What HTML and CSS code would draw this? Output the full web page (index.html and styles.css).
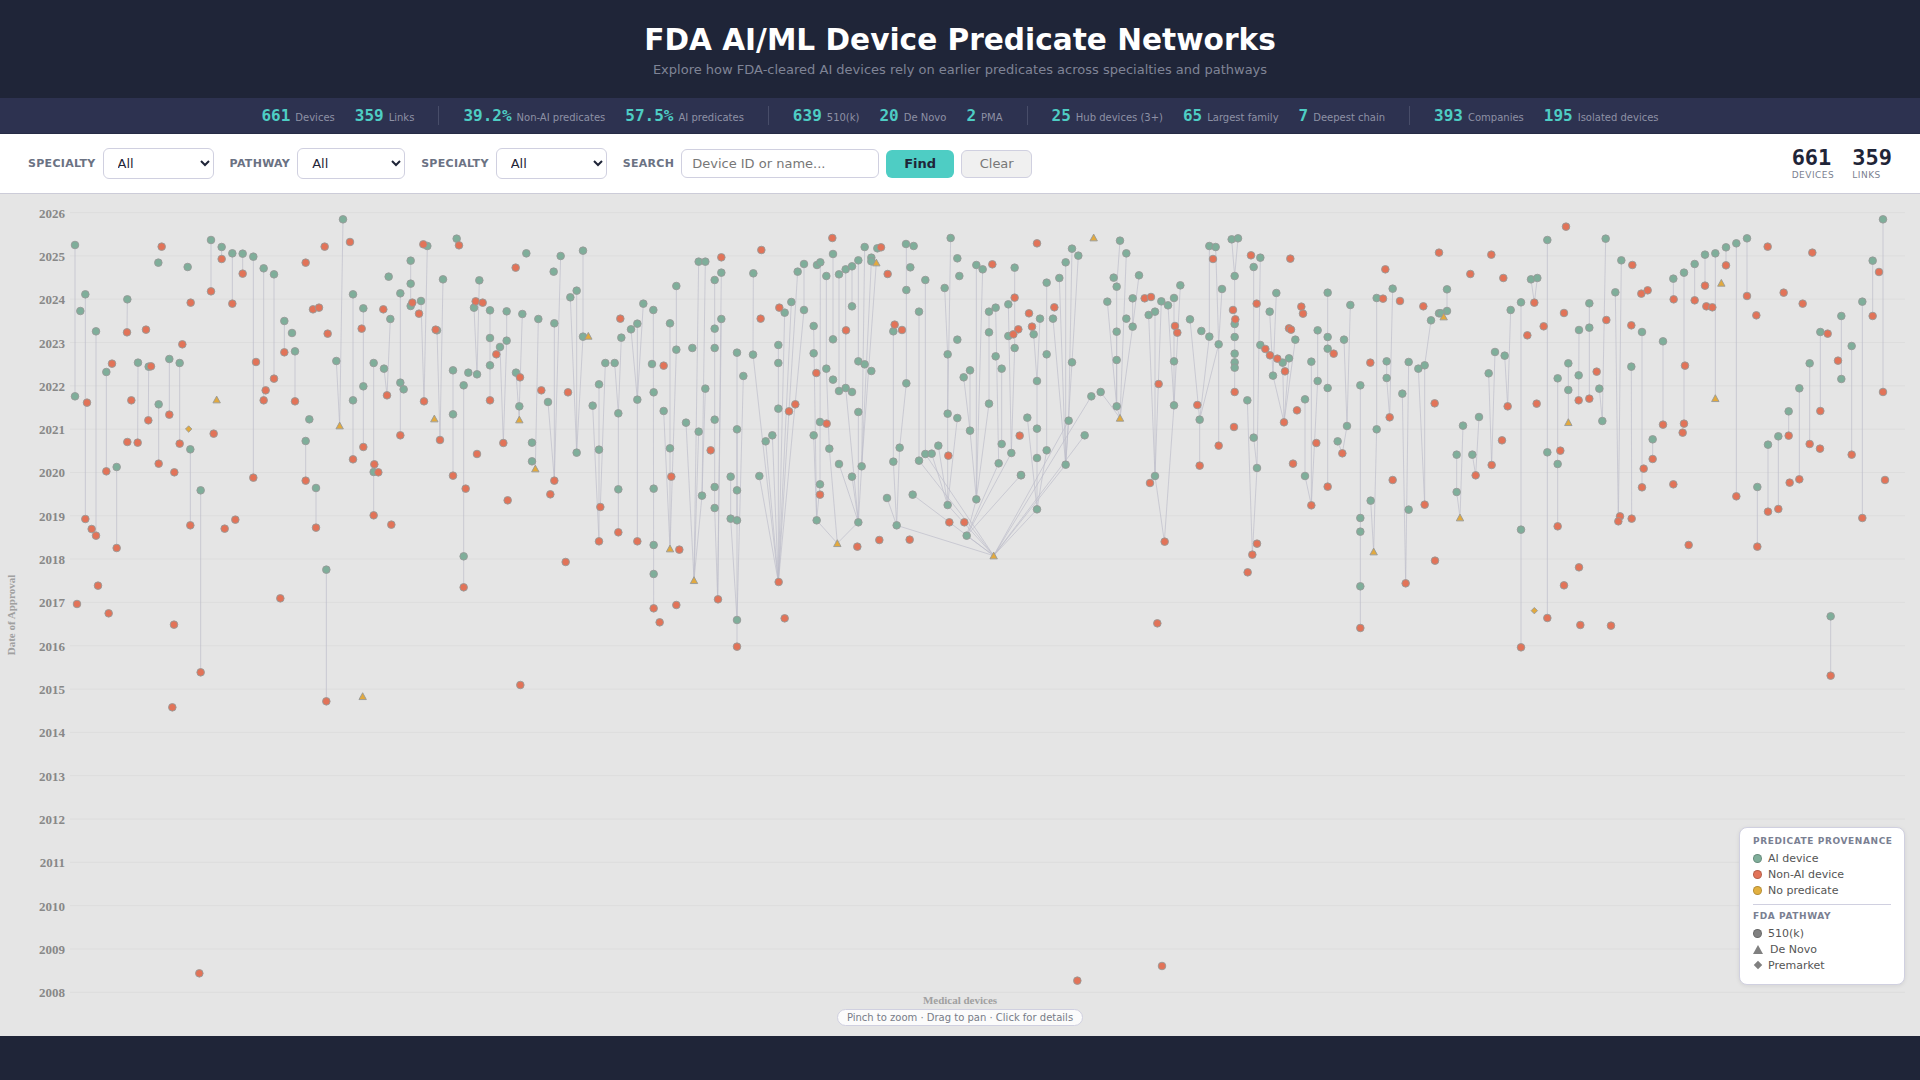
FILE: index.html
```html
<!DOCTYPE html>
<html lang="en">
<head>
    <meta charset="UTF-8">
    <meta name="viewport" content="width=device-width, initial-scale=1.0">
    <title>FDA AI/ML Device Predicate Networks</title>
    <link rel="stylesheet" href="styles.css">
</head>
<body>
    <header class="site-header">
        <h1>FDA AI/ML Device Predicate Networks</h1>
        <p>Explore how FDA-cleared AI devices rely on earlier predicates across specialties and pathways</p>
    </header>

    <div class="stats-bar">
        <div class="stat-group">
            <div class="stat"><b>661</b><span>Devices</span></div>
            <div class="stat"><b>359</b><span>Links</span></div>
        </div>
        <div class="stat-group">
            <div class="stat"><b>39.2%</b><span>Non-AI predicates</span></div>
            <div class="stat"><b>57.5%</b><span>AI predicates</span></div>
        </div>
        <div class="stat-group">
            <div class="stat"><b>639</b><span>510(k)</span></div>
            <div class="stat"><b>20</b><span>De Novo</span></div>
            <div class="stat"><b>2</b><span>PMA</span></div>
        </div>
        <div class="stat-group">
            <div class="stat"><b>25</b><span>Hub devices (3+)</span></div>
            <div class="stat"><b>65</b><span>Largest family</span></div>
            <div class="stat"><b>7</b><span>Deepest chain</span></div>
        </div>
        <div class="stat-group">
            <div class="stat"><b>393</b><span>Companies</span></div>
            <div class="stat"><b>195</b><span>Isolated devices</span></div>
        </div>
    </div>

    <div class="toolbar">
        <div class="filter">
            <label for="specialty-a">Specialty</label>
            <select id="specialty-a"><option>All</option></select>
        </div>
        <div class="filter">
            <label for="pathway">Pathway</label>
            <select id="pathway" class="narrow"><option>All</option></select>
        </div>
        <div class="filter">
            <label for="specialty-b">Specialty</label>
            <select id="specialty-b"><option>All</option></select>
        </div>
        <div class="filter search">
            <label for="search">Search</label>
            <input type="text" id="search" placeholder="Device ID or name...">
            <button type="button" class="find-button">Find</button>
            <button type="button" class="clear-button">Clear</button>
        </div>
        <div class="totals">
            <div class="total"><b>661</b><span>Devices</span></div>
            <div class="total"><b>359</b><span>Links</span></div>
        </div>
    </div>

    <main class="chart">
        <svg id="plot" class="plot" width="1920" height="842"></svg>

        <div class="hint">Pinch to zoom · Drag to pan · Click for details</div>

        <aside class="legend">
            <h4>Predicate Provenance</h4>
            <div class="legend-item"><i class="dot ai"></i>AI device</div>
            <div class="legend-item"><i class="dot non-ai"></i>Non-AI device</div>
            <div class="legend-item"><i class="dot none"></i>No predicate</div>
            <hr>
            <h4>FDA Pathway</h4>
            <div class="legend-item"><i class="dot grey"></i>510(k)</div>
            <div class="legend-item"><i class="tri"></i>De Novo</div>
            <div class="legend-item"><i class="dia"></i>Premarket</div>
        </aside>
    </main>

    <script src="chart.js"></script>
</body>
</html>
```

FILE: styles.css
```css
* {
    box-sizing: border-box;
}

html, body {
    height: 100%;
}

body {
    margin: 0;
    padding-bottom: 44px;
    display: flex;
    flex-direction: column;
    font-family: "DejaVu Sans", sans-serif;
    background-color: #1f2538;
    overflow: hidden;
}

.site-header {
    height: 98px;
    padding-top: 22px;
    text-align: center;
    background-color: #1f2538;
}

.site-header h1 {
    margin: 0;
    font-size: 29.6px;
    line-height: 36px;
    font-weight: 700;
    color: #fff;
}

.site-header p {
    margin: 3px 0 0;
    font-size: 13px;
    line-height: 17px;
    color: #7f8496;
}

.stats-bar {
    height: 36px;
    display: flex;
    justify-content: center;
    align-items: center;
    background-color: #2d3250;
    border-bottom: 1px solid #262b45;
}

.stat-group {
    display: flex;
    gap: 20px;
    padding: 0 24px;
    height: 19px;
    align-items: center;
    border-right: 1px solid #484d69;
}

.stat-group:last-child {
    border-right: none;
}

.stat {
    display: flex;
    align-items: baseline;
    gap: 5px;
    white-space: nowrap;
}

.stat b {
    font-family: "DejaVu Sans Mono", monospace;
    font-size: 16px;
    color: #4ecdc4;
}

.stat span {
    font-size: 10px;
    color: #8d91a5;
}

.toolbar {
    height: 60px;
    padding: 0 28px;
    display: flex;
    align-items: center;
    gap: 16px;
    background-color: #fff;
    border-bottom: 1px solid #ccccd8;
}

.filter {
    display: flex;
    align-items: center;
    gap: 7px;
}

.filter label {
    font-size: 11px;
    font-weight: 700;
    letter-spacing: 0.3px;
    text-transform: uppercase;
    color: #6b7283;
}

.filter select {
    width: 111px;
    height: 31px;
    padding: 0 10px;
    font-family: inherit;
    font-size: 13px;
    color: #1f2538;
    background-color: #fff;
    border: 1px solid #d0d0e0;
    border-radius: 6px;
}

.filter select.narrow {
    width: 108px;
}

.search input {
    width: 198px;
    height: 29px;
    padding: 0 10px;
    font-family: inherit;
    font-size: 13px;
    border: 1px solid #d0d0e0;
    border-radius: 6px;
}

.search input::placeholder {
    color: #777;
}

.search button {
    height: 28px;
    padding: 0;
    font-family: inherit;
    font-size: 13px;
    border-radius: 6px;
}

.find-button {
    width: 68px;
    font-weight: 700;
    color: #1f2538;
    background-color: #4ecdc4;
    border: none;
}

.clear-button {
    width: 71px;
    color: #777;
    background-color: #f0f0f0;
    border: 1px solid #d0d0e0;
}

.totals {
    margin-left: auto;
    display: flex;
    gap: 18px;
}

.total b {
    display: block;
    font-family: "DejaVu Sans Mono", monospace;
    font-size: 22px;
    line-height: 24px;
    color: #1f2538;
}

.total span {
    display: block;
    font-size: 9px;
    line-height: 11px;
    letter-spacing: 0.5px;
    text-transform: uppercase;
    color: #7a7f90;
}

.chart {
    position: relative;
    flex: 1;
    background-color: #e5e5e5;
    overflow: hidden;
}

.plot {
    display: block;
}

.grid-line {
    stroke: #dddddd;
    stroke-width: 1;
}

.year-label {
    font-family: "Liberation Serif", serif;
    font-size: 13px;
    font-weight: 700;
    fill: #888;
    text-anchor: end;
}

.axis-title {
    font-family: "Liberation Serif", serif;
    font-size: 11px;
    font-weight: 700;
    fill: #a0a0a0;
    text-anchor: middle;
}

.link {
    stroke: #bcbcca;
    stroke-width: 0.9;
    stroke-opacity: 0.75;
}

.node {
    stroke: #979a98;
    stroke-width: 0.9;
}

.node.ai {
    fill: #7fae9a;
}

.node.non-ai {
    fill: #e27358;
}

.node.none {
    fill: #e2a93e;
}

.hint {
    position: absolute;
    left: 837px;
    top: 815px;
    width: 246px;
    height: 17px;
    font-size: 10px;
    line-height: 15px;
    text-align: center;
    color: #777b88;
    background-color: rgba(255, 255, 255, 0.85);
    border: 1px solid #d0d0e0;
    border-radius: 9px;
}

.legend {
    position: absolute;
    right: 15px;
    top: 633px;
    width: 166px;
    height: 158px;
    padding: 7px 13px;
    background-color: #fff;
    border: 1px solid #d0d0e0;
    border-radius: 8px;
    box-shadow: 0 1px 4px rgba(0, 0, 0, 0.08);
}

.legend h4 {
    margin: 0 0 3px;
    font-size: 9px;
    line-height: 12px;
    font-weight: 700;
    letter-spacing: 0.6px;
    text-transform: uppercase;
    white-space: nowrap;
    color: #7a8092;
}

.legend hr {
    margin: 6px 0 5px;
    border: none;
    border-top: 1px solid #d0d0e0;
}

.legend-item {
    height: 16px;
    display: flex;
    align-items: center;
    gap: 6px;
    font-size: 11px;
    color: #555;
}

.dot {
    width: 9px;
    height: 9px;
    border-radius: 50%;
    border: 1px solid rgba(0, 0, 0, 0.2);
}

.dot.ai {
    background-color: #7fae9a;
}

.dot.non-ai {
    background-color: #e27358;
}

.dot.none {
    background-color: #e2b040;
}

.dot.grey {
    background-color: #808080;
}

.tri {
    width: 0;
    height: 0;
    margin-right: 1px;
    border-left: 5px solid transparent;
    border-right: 5px solid transparent;
    border-bottom: 9px solid #808080;
}

.dia {
    width: 6px;
    height: 6px;
    margin: 0 1.5px;
    background-color: #808080;
    transform: rotate(45deg);
}
```

FILE: chart.js
```js
// Node and link positions were read per screen tile, at 3x scale.
// Each tile has its own origin so a value is (origin + v / 3) in page pixels.
const TOP = 194; // top of the .chart element
const tiles = [
    {
        x: 0, y: 190,
        green: [225,165,256,313,241,363,288,424,319,546,382,328,414,518,446,530,508,507,539,519,476,643,475,218,563,231,633,150,665,171,697,190,728,191,760,200,791,235,822,253,853,393,876,429,885,484,225,619,350,831,571,778,928,688,917,753,1009,513,1059,313,1090,355,1029,88,1059,631,1090,589,1121,519,1152,536,1166,260,1171,387,1201,310,1232,212,1232,281,1232,348,1263,333,1201,578,1211,598,1282,168,1311,421,1329,268,1121,846,1359,541,1359,673,1391,586,1405,548,1431,553,1422,353,1438,271,1370,146],
        red: [485,170,665,207,633,304,572,338,697,341,728,251,381,427,438,419,547,463,336,521,261,638,394,631,453,529,445,691,382,756,413,758,508,674,539,761,641,731,319,844,476,821,523,847,768,516,822,566,797,601,791,631,853,487,885,634,917,218,939,358,957,353,983,431,974,170,1050,156,1085,416,1150,358,1161,616,1237,338,1257,371,1270,163,1272,634,1307,419,1320,750,1201,736,1090,771,1059,808,1123,823,1135,847,1359,857,1377,166,1427,334,1431,792,760,863],
        tri: [650,629,1019,707,1303,686],
        dia: [566,717],
        links: [225,165,225,619, 256,313,256,987, 288,424,288,1037, 319,546,319,844, 382,328,381,427, 414,518,413,758, 446,530,445,691, 476,643,476,821, 508,507,508,674, 539,519,539,761, 350,831,350,1074, 571,778,571,1006, 602,901,602,1447, 633,150,633,304, 665,171,665,207, 697,190,697,341, 728,191,728,251, 760,200,760,863, 791,235,791,631, 822,253,822,566, 853,393,853,487, 885,484,885,634, 917,753,917,872, 948,894,948,1013, 979,1139,979,1534, 1029,88,1019,707, 1009,513,1019,707, 1059,313,1059,808, 1090,355,1090,771, 1121,519,1121,976, 1152,536,1161,616, 1171,387,1161,616, 1201,310,1201,736, 1232,212,1232,348, 1263,333,1272,634, 1282,168,1272,634, 1311,421,1320,750, 1329,268,1320,750, 1359,541,1359,857, 1391,586,1391,1192, 1422,353,1431,553, 1438,271,1431,553]
    },
    {
        x: 0, y: 470,
        green: [602,61,948,54,979,299,1391,259],
        red: [256,147,275,177,288,197,350,234,571,166,674,176,706,149,917,32,948,173,1121,136,1174,164,1397,56,1391,352,294,347,231,402,326,430,522,464,841,385,602,607,517,712,979,694],
        tri: [1088,679],
        dia: [],
        links: []
    },
    {
        x: 480, y: 190,
        green: [139,190,242,198,309,182,221,245,290,302,271,322,490,341,589,288,520,360,656,215,676,215,704,270,724,248,820,250,972,222,953,245,1011,225,1021,217,1059,192,1039,258,1077,253,1097,238,1116,229,1135,211,1154,171,1174,203,1174,214,1192,175,1278,162,1301,168,1291,232,1336,270,1279,300,1394,294,1412,144,1432,205,1438,258,30,361,80,364,127,372,175,387,223,400,30,444,80,452,60,471,30,526,108,548,309,440,424,443,453,418,472,401,570,400,724,387,704,416,704,474,637,474,589,479,516,522,376,519,404,519,357,583,521,607,472,629,415,670,338,647,551,663,618,698,656,725,704,689,676,596,771,488,790,558,819,494,771,718,895,465,895,519,895,656,972,360,914,368,934,336,1001,408,1001,490,1116,349,1059,448,1039,536,1059,569,1077,603,1097,594,1116,606,1135,514,1154,523,1174,543,1135,666,1020,696,1001,736,1048,776,857,754,877,736,1077,822,1145,829,1240,424,1279,580,1317,365,1403,493,1432,449,1403,671,1432,684,1240,815,1259,773,1317,812,1336,792,1355,791,1375,767,118,649,204,636,156,758,156,814,290,788,357,779,570,775,752,860,838,858,1116,860],
        red: [107,233,724,202,844,180,1057,144,1203,172,1223,252,8,338,421,386,842,386,898,353,1098,421,1244,404,1266,420,49,493,120,562,551,527,184,601,264,607,30,631,1009,549,946,643,927,664,1040,701,70,759,692,781,1405,797,574,860],
        tri: [325,438,1189,218,118,689,166,836],
        dia: [],
        links: [30,361,30,631, 80,364,80,452, 60,471,70,759, 80,452,70,759, 127,372,118,649, 108,548,118,689, 118,649,118,689, 175,387,166,836, 242,198,223,870, 223,400,223,870, 204,636,223,870, 271,322,290,788, 290,302,290,788, 309,182,309,440, 309,440,290,788, 338,647,357,1054, 357,583,357,1054, 376,519,361,951, 404,519,415,670, 424,443,415,670, 415,670,415,1027, 453,418,472,629, 490,341,472,629, 472,401,472,629, 472,629,472,1054, 520,360,521,1254, 570,400,570,1075, 589,288,589,479, 589,479,570,1075, 551,663,570,1075, 618,698,642,1170, 656,215,642,1170, 676,215,666,917, 676,596,666,917, 666,917,642,1170, 656,725,642,1170, 704,270,704,954, 724,248,713,1227, 704,954,713,1227, 724,387,713,1227, 752,860,752,986, 752,986,771,1290, 771,488,771,991, 790,558,771,1290, 771,718,771,1290, 771,1290,771,1370, 820,250,819,494, 819,494,895,1176, 838,858,895,1176, 857,754,895,1176, 877,736,895,1176, 895,465,895,1176, 914,368,895,1176, 934,336,895,1176, 953,245,895,1176, 972,222,972,360, 972,360,895,1176, 1001,408,1010,991, 1021,217,1020,883, 1020,883,1010,991, 1001,736,1010,991, 1059,192,1059,448, 1039,258,1039,536, 1039,536,1048,776, 1048,776,1072,1060, 1077,253,1077,603, 1077,822,1135,996, 1116,229,1116,349, 1097,238,1097,594, 1097,594,1135,996, 1116,860,1135,996, 1135,211,1135,514, 1135,666,1135,996, 1154,171,1145,829, 1174,214,1145,829, 1189,218,1145,829, 1145,829,1135,996, 1010,991,1072,1060, 1135,996,1072,1060, 1240,424,1240,815, 1279,162,1279,580, 1279,580,1259,773, 1240,815,1250,1006, 1259,773,1250,1006, 1221,924,1250,1006, 1250,1006,1541,1097, 1298,914,1541,1097, 1317,365,1317,812, 1336,270,1336,792, 1394,294,1403,493, 1412,144,1403,671, 1403,493,1403,671, 1403,671,1403,945, 1432,684,1403,945, 1355,791,1403,945, 1375,767,1403,945, 1317,812,1541,1097, 1336,792,1541,1097, 1403,945,1541,1097]
    },
    {
        x: 480, y: 470,
        green: [415,58,521,56,666,77,704,51,771,61,704,114,752,146,771,151,1020,43,1010,151,1135,157,1221,84,1298,74,1250,166,1403,105,521,225,521,312,771,450],
        red: [223,32,211,73,83,91,361,111,357,214,415,187,472,214,598,239,257,276,521,415,589,405,539,457,714,388,896,336,914,445,771,530,121,645,1132,230,1198,210,1289,209,1408,157,1020,74],
        tri: [570,236,642,331,1072,220],
        dia: [],
        links: []
    },
    {
        x: 960, y: 190,
        green: [49,225,68,238,164,233,317,217,336,176,355,197,298,264,260,278,480,152,499,190,461,263,470,290,537,256,442,335,518,325,604,334,624,346,642,324,661,286,566,375,585,365,690,388,724,423,748,440,776,463,748,168,767,171,815,148,834,145,824,258,786,297,881,231,901,203,949,309,929,365,1103,308,1171,345,1250,324,1298,296,1413,391,1437,370,87,365,107,353,145,343,240,386,279,386,87,427,145,438,221,433,164,474,107,499,125,536,30,541,11,562,231,573,260,493,336,517,87,641,30,722,202,683,231,716,326,692,125,762,116,820,154,789,260,781,231,804,317,824,183,856,374,736,394,619,422,606,470,425,470,510,499,386,518,410,470,649,642,514,642,646,719,689,824,402,824,441,824,491,824,517,824,533,901,465,968,518,987,505,939,557,1006,449,1073,421,1103,441,1103,476,1152,449,1054,515,1073,573,1103,594,1201,586,1280,514,1280,564,1346,516,1375,536,1394,526,1327,611,862,631,1035,628,881,743,891,834,1161,708,1133,754,1250,718,585,858,1035,858],
        red: [231,160,97,223,164,323,207,370,283,352,216,410,175,418,160,433,873,196,991,206,759,207,554,325,573,321,819,360,826,388,890,341,1024,350,1029,371,1276,238,1269,326,1320,333,1390,349,645,408,652,428,987,415,993,419,916,477,930,496,952,506,975,544,1121,491,1231,518,596,582,824,606,712,645,972,697,1011,661,1289,682,1424,640,822,711,179,737,776,767,719,827,999,821,1069,759,1147,790,1437,188,1298,870],
        tri: [401,143,480,684],
        dia: [],
        links: [49,225,49,928, 30,541,30,722, 11,562,30,722, 30,722,49,928, 68,238,49,928, 87,641,49,928, 49,928,20,1037, 87,365,87,641, 107,353,116,820, 125,536,125,762, 145,343,154,789, 164,233,164,474, 164,474,154,789, 154,789,20,1037, 116,820,20,1037, 183,855,20,1037, 20,1037,101,1097, 317,824,101,1097, 326,692,101,1097, 394,619,101,1097, 374,736,101,1097, 231,958,101,1097, 260,781,231,958, 231,804,231,958, 231,573,231,804, 221,433,231,573, 240,386,231,573, 279,386,317,824, 298,264,317,824, 317,217,317,824, 336,176,326,692, 355,197,336,517, 336,517,317,824, 326,692,317,824, 202,683,231,958, 260,278,260,781, 480,152,470,290, 499,190,480,684, 470,290,470,510, 442,335,470,649, 470,425,470,649, 470,510,470,649, 537,256,518,410, 518,325,518,410, 518,410,480,684, 422,606,480,684, 470,649,480,684, 566,375,585,858, 585,365,585,858, 604,334,585,858, 624,346,642,646, 642,324,642,646, 661,286,642,646, 642,646,613,1055, 585,858,613,1055, 690,388,719,689, 748,440,719,689, 776,463,719,689, 719,689,719,827, 748,168,748,440, 767,171,776,463, 786,297,776,463, 776,463,776,767, 815,148,824,258, 834,145,824,258, 824,258,824,606, 881,231,881,743, 901,203,891,834, 881,743,891,834, 862,631,877,1094, 891,834,877,1094, 929,365,939,557, 949,309,939,557, 939,557,972,697, 968,518,972,697, 987,505,972,697, 1006,449,972,697, 1035,628,1035,858, 1035,858,1054,946, 1054,515,1054,946, 1073,421,1073,573, 1073,573,1054,946, 1103,308,1103,890, 1152,449,1161,708, 1171,345,1161,708, 1161,708,1147,790, 1133,754,1147,790, 1201,586,1201,1314, 1250,324,1250,718, 1250,718,1241,1085, 1232,932,1241,1085, 1280,514,1280,564, 1280,564,1289,682, 1298,296,1289,682, 1346,516,1337,1180, 1327,611,1337,1180, 1375,536,1394,944, 1394,526,1394,944, 1413,391,1394,526]
    },
    {
        x: 960, y: 470,
        green: [20,197,49,88,183,15,231,118,1232,92,1201,144,1201,185,1201,349,1346,119],
        red: [13,157,570,39,614,215,891,221,877,254,863,307,1054,106,1103,50,1337,340,1394,104,1425,272,592,460,1201,474],
        tri: [101,257,1241,245],
        dia: [],
        links: []
    },
    {
        x: 1440, y: 190,
        green: [21,298,21,363,3,370,322,150,497,146,273,268,292,264,243,337,212,360,448,340,417,420,448,413,526,307,544,211,606,426,669,454,574,530,165,486,194,497,146,550,385,520,416,556,385,600,353,565,478,596,487,693,69,707,117,681,50,794,97,794,322,787,353,822,638,748,700,266,732,248,764,222,795,194,826,190,858,172,889,160,921,145,1329,88,1298,212,1267,335,1204,378,1141,426,1235,468,1204,567,1109,520,1078,595,1046,664,1015,739,984,764],
        red: [378,110,577,225,604,311,623,301,154,194,91,252,190,264,283,338,372,369,311,409,262,436,499,390,574,406,470,545,416,631,448,626,203,649,290,641,186,751,155,825,107,856,361,782,611,836,638,807,669,704,732,701,728,728,735,527,701,328,764,331,795,287,799,349,817,352,858,226,921,318,949,376,983,170,1117,188,1031,308,1088,341,1317,246,1298,378,1163,431,1194,512,1141,663,1329,606,1109,762,1140,776,1046,737,1235,794,1078,868,1335,870,1049,878],
        tri: [11,380,844,279,826,625,385,697],
        dia: [],
        links: [21,298,21,363, 21,363,11,380, 322,150,322,1284, 353,565,353,1009, 385,520,385,697, 417,420,416,631, 448,340,448,626, 497,146,487,693, 478,596,487,693, 544,211,535,994, 526,307,535,994, 574,530,575,986, 606,426,606,892, 669,454,669,704, 732,248,732,701, 638,748,638,807, 700,266,700,328, 764,222,764,331, 795,194,795,287, 826,190,826,625, 858,172,858,226, 889,160,889,919, 921,145,921,318, 146,550,155,825, 165,486,155,825, 194,497,203,649, 212,360,203,649, 273,268,283,338, 292,264,283,338, 69,707,60,983, 50,794,50,906, 50,906,60,983, 97,794,107,856, 117,681,107,856, 243,337,243,1372, 984,764,984,965, 1015,739,1015,957, 1046,664,1046,737, 1078,595,1078,868, 1109,520,1109,762, 1141,426,1141,663, 1204,378,1204,567, 1235,468,1235,794, 1267,335,1267,984, 1298,212,1298,378, 1329,88,1329,606, 952,891,952,1070, 1172,1279,1172,1457]
    },
    {
        x: 1440, y: 470,
        green: [50,66,243,179,952,51,1172,439],
        red: [606,52,540,139,535,154,575,146,700,43,889,79,984,125,1015,117,1267,144,353,169,746,225,952,230,417,292,372,346,322,444,421,465,513,467,243,532,1172,617],
        tri: [60,143],
        dia: [283,422],
        links: []
    },
    {
        // the three oldest devices, down near 2008
        x: 0, y: 940,
        green: [],
        red: [598,100,3232,122,3486,78],
        tri: [],
        dia: [],
        links: []
    }
];

const svg = document.getElementById('plot');

function add(tag, attrs, text) {
    const el = document.createElementNS('http://www.w3.org/2000/svg', tag);
    for (const key in attrs) {
        el.setAttribute(key, attrs[key]);
    }
    if (text) el.textContent = text;
    svg.appendChild(el);
    return el;
}

// Horizontal grid, one line per year
for (let year = 2008; year <= 2026; year++) {
    const y = 992.3 - (year - 2008) * 43.32 - TOP;
    add('line', { class: 'grid-line', x1: 70, x2: 1905, y1: y, y2: y });
    add('text', { class: 'year-label', x: 65, y: y + 5 }, String(year));
}

add('text', { class: 'axis-title', transform: 'translate(15 421) rotate(-90)' }, 'Date of Approval');
add('text', { class: 'axis-title', x: 960, y: 810 }, 'Medical devices');

function eachPair(list, fn) {
    for (let i = 0; i < list.length; i += 2) fn(list[i], list[i + 1]);
}

tiles.forEach(function(t) {
    for (let i = 0; i < t.links.length; i += 4) {
        add('line', {
            class: 'link',
            x1: t.x + t.links[i] / 3,
            y1: t.y + t.links[i + 1] / 3 - TOP,
            x2: t.x + t.links[i + 2] / 3,
            y2: t.y + t.links[i + 3] / 3 - TOP
        });
    }
});

function circles(key, cls) {
    tiles.forEach(function(t) {
        eachPair(t[key], function(a, b) {
            add('circle', { class: 'node ' + cls, r: 3.8, cx: t.x + a / 3, cy: t.y + b / 3 - TOP });
        });
    });
}

circles('green', 'ai');
circles('red', 'non-ai');

tiles.forEach(function(t) {
    eachPair(t.tri, function(a, b) {
        const x = t.x + a / 3;
        const y = t.y + b / 3 - TOP;
        add('polygon', {
            class: 'node none',
            points: (x - 3.7) + ',' + (y + 3.2) + ' ' + (x + 3.7) + ',' + (y + 3.2) + ' ' + x + ',' + (y - 3.6)
        });
    });
    eachPair(t.dia, function(a, b) {
        const x = t.x + a / 3;
        const y = t.y + b / 3 - TOP;
        add('polygon', {
            class: 'node none',
            points: (x - 3.2) + ',' + y + ' ' + x + ',' + (y - 3.2) + ' ' + (x + 3.2) + ',' + y + ' ' + x + ',' + (y + 3.2)
        });
    });
});
```
